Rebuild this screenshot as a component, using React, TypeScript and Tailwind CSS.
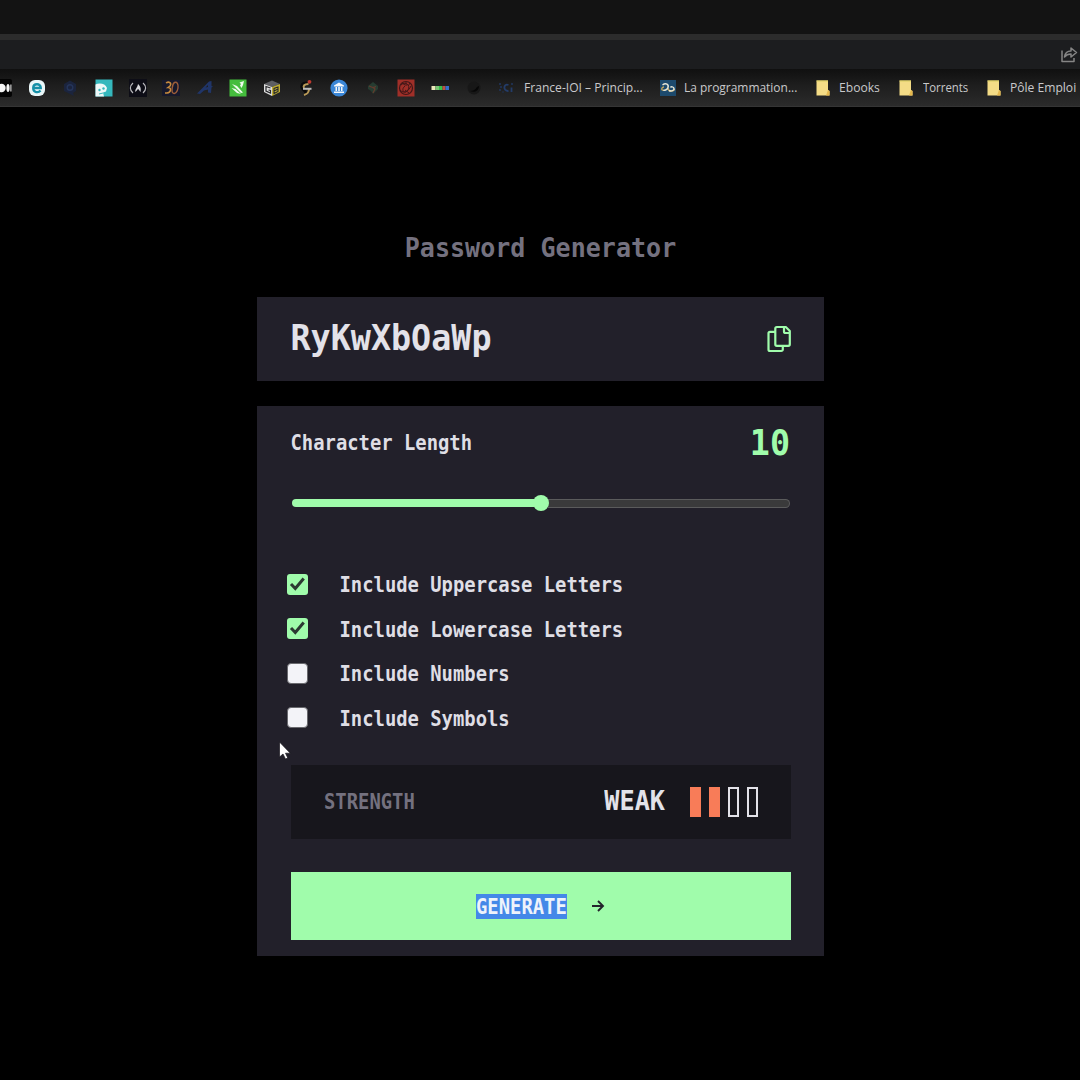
import React from 'react';

const mono = "font-['DejaVu_Sans_Mono',monospace] font-bold whitespace-pre";

function Favicon({ children }: { children: React.ReactNode }) {
  return (
    <div className="w-[33.6px] shrink-0 flex justify-center">
      <svg width="18" height="18" viewBox="0 0 18 18" fill="none">{children}</svg>
    </div>
  );
}

function Favicons() {
  return (
    <div className="flex shrink-0 -ml-[13.5px]">
      <Favicon>
        <rect width="18" height="18" rx="2" fill="#030303" />
        <circle cx="7.500" cy="9" r="4.200" fill="#f4f4f4" />
        <ellipse cx="14" cy="9" rx="1.600" ry="4" fill="#f4f4f4" />
        <rect x="16.300" y="5.500" width="1.200" height="7" fill="#d4d4d4" />
      </Favicon>
      <Favicon>
        <rect x="1" y="1" width="16" height="16" rx="6" fill="#e9f6f8" />
        <path d="M5.200 9h7.600c0-5-7.600-5-7.600 0s5.500 5 7.300 2.500" stroke="#1590a8" strokeWidth="2.300" />
      </Favicon>
      <Favicon>
        <path d="M9 1.500l6 3.500v7l-3 2 1 3-4-2-6-3V5z" fill="#1b243d" />
        <circle cx="9" cy="8.500" r="2.800" stroke="#25355a" strokeWidth="1.400" />
      </Favicon>
      <Favicon>
        <rect x="0.500" y="0.500" width="17" height="17" fill="#35b8bd" />
        <path d="M0.500 5.500c4-2 10-1 11.500 3.500l-1 3.500-3 1 1 4H0.500z" fill="#eef8f8" />
        <circle cx="4.500" cy="11" r="1.200" fill="#35b8bd" />
        <circle cx="8.500" cy="9.500" r="1.200" fill="#35b8bd" />
        <path d="M4 15l4-1" stroke="#35b8bd" />
      </Favicon>
      <Favicon>
        <rect width="18" height="18" fill="#0d0d16" />
        <path d="M4 4C0.500 7 0.500 11 4 14M14 4c3.500 3 3.500 7 0 10" stroke="#b9b9bd" strokeWidth="1.200" />
        <path d="M6.500 13c-1-3 2-4 2.500-8 3 3 3 5 2.500 8-1-1-1-2-2.500-3-1 1-1.500 2-2.500 3z" fill="#d8d8dc" />
      </Favicon>
      <Favicon>
        <rect y="1" width="18" height="16" fill="#16182c" />
        <path d="M4 4c3-2 6 0 4 3L6 8.500c4 0 3 5-1 5.500H3" stroke="#c78a3e" strokeWidth="1.500" />
        <path d="M12.500 3.500c-2 1-3.500 9-1.500 10.500s4.500-1 5-5-1-6.500-3.500-5.500z" stroke="#9b5c3a" strokeWidth="1.400" />
      </Favicon>
      <Favicon>
        <path d="M1 14.500L13 2.500l2.500-.5V7l1.500.5-1.500 1L15 14l-3-.5v-3l-4 1-4 3.500zM9.500 8.500l2.500-.5V6z" fill="#203568" fillRule="evenodd" />
      </Favicon>
      <Favicon>
        <rect x="0.500" y="0.500" width="17" height="17" fill="#45bd3d" />
        <path d="M3 5l5 2 6 6.500-2 .5zM2.500 9l4 1 5.500 5-4-1zM10.500 3.500l4.500-1.500-1 4-1.500 3-1.500-2.500 1-1.500z" fill="#effbed" />
      </Favicon>
      <Favicon>
        <path d="M1 5l8-3.500L17 5l-8 3z" fill="#5e5f63" />
        <path d="M1 5l8 3v9l-8-4z" fill="#dedede" />
        <path d="M17 5L9 8v9l8-4z" fill="#c0ae32" />
        <path d="M7.500 9L3 7.500v4.500l4.500 2v-2.500L5.500 11" stroke="#27272a" strokeWidth="1.200" />
        <path d="M11 9.500v5l4-2V8zM11 12l4-2" stroke="#27272a" strokeWidth="1.100" />
      </Favicon>
      <Favicon>
        <path d="M10 4C4 4 4 8 6 10s4 3 2 6" stroke="#09090a" strokeWidth="3" />
        <path d="M11.500 5C7 5 6 7 7 9M12 10c0 4-2 5-5 6" stroke="#b99a58" strokeWidth="2" />
        <path d="M6 9.800h8.500" stroke="#bababa" strokeWidth="2" />
        <circle cx="12.500" cy="2.800" r="1.900" fill="#bd392e" />
      </Favicon>
      <Favicon>
        <circle cx="9" cy="9" r="8.600" fill="#3a86d6" />
        <path d="M4 6.500L9 3.500l5 3v1H4zM5.500 8h1.500v4H5.500zM8.200 8h1.600v4H8.200zM11 8h1.500v4H11zM4 12.500h10V14H4z" fill="#f4f8fc" />
      </Favicon>
      <Favicon>
        <path d="M4 7l5-4 5 4 0 3-5 5-2-3-3-2z" fill="#263c31" />
        <path d="M5 7l4 1.500 3-1M9 8.500l2 1.500-2 4" stroke="#643a2d" strokeWidth="1.200" />
      </Favicon>
      <Favicon>
        <rect x="0.500" y="0.500" width="17" height="17" fill="#a02f28" />
        <circle cx="9" cy="9" r="6.500" stroke="#421718" strokeWidth="1.200" />
        <path d="M4 6c4-4 10 0 7 5s-8 0-3-4M3 11c4 4 8 2 11-4M9 3v4M8 11l4 3M5 4l3 2M13 4l-2 3" stroke="#421718" strokeWidth="1" />
      </Favicon>
      <Favicon>
        <rect x="0.500" y="7" width="4" height="4" fill="#ebe7ba" />
        <rect x="4.500" y="7" width="3.500" height="4" fill="#7bc575" />
        <rect x="8" y="7" width="3.500" height="4" fill="#36c14b" />
        <rect x="11.500" y="7" width="3" height="4" fill="#bf5141" />
        <rect x="14.500" y="7" width="3.500" height="4" fill="#346dca" />
      </Favicon>
      <Favicon>
        <circle cx="9" cy="9" r="6.500" fill="#171717" />
        <path d="M5 12c3 0 5-1 7-4l2-1c0 5-5 7-9 5z" fill="#070707" />
      </Favicon>
      <Favicon>
        <path d="M10.500 6C5 4 5 12.500 10.500 12M13.500 8.500V13" stroke="#233c69" strokeWidth="1.800" />
        <path d="M1 5h2M2 8h2M1 11h2M13 5h2M4.500 13h1" stroke="#20365d" strokeWidth="1.500" />
      </Favicon>
    </div>
  );
}

function Folder() {
  return (
    <svg width="14" height="16" viewBox="0 0 14 16" className="shrink-0">
      <path d="M0.500 0.500h11.500V10l1.500 1v4.500H0.500z" fill="#f4dc86" />
      <path d="M0.500 0.500h11.500v1H0.500z" fill="#d8cf60" />
      <path d="M12 10l1.500 1v4.500H10z" fill="#e5b84d" />
    </svg>
  );
}

function BrowserChrome() {
  const label = "font-['Open_Sans','Noto_Sans',sans-serif] text-[13px] leading-[18px] pb-[2px] whitespace-nowrap text-[#c9c9cb]";
  return (
    <header className="h-[108px] overflow-hidden">
      <div className="h-[34px] bg-[#131313]" />
      <div className="h-[6px] bg-[#2c2c2c]" />
      <div className="h-[29px] bg-[#1c1d1f] flex justify-end pr-[2px] pt-[5px]">
        <svg width="18" height="18" viewBox="0 0 18 18" fill="none" stroke="#858585" strokeWidth="1.500" strokeLinejoin="round">
          <path d="M2 5.500v11h12V13" />
          <path d="M4.500 12C5 8 7.500 6 11 6V3l5.500 4.500L11 12V9C8 9 6 10 4.500 12z" />
        </svg>
      </div>
      <div className="h-[38px] flex items-center bg-linear-to-b from-[#101010] via-[#1e1e1e] via-45% to-[#2b2b2b] border-b border-[#353535]">
        <Favicons />
        <span className={`${label} ml-[-0.500px] w-[136px] shrink-0`}><Fit w={119}>France-IOI – Princip...</Fit></span>
        <svg width="16" height="16" viewBox="0 0 16 16" fill="none" className="shrink-0">
          <rect width="16" height="16" fill="#1d4a6d" />
          <path d="M4 10c-3 1-3-3 0-3M8 8c0 4 6 4 6.500 1" stroke="#c7a75b" strokeWidth="1.300" />
          <path d="M2.500 5C6 2.500 9 4.500 8 7.500S4 10.500 3.500 10M9 10.500c2 1 5.500 0 5-2S11 6.500 10.500 7.500" stroke="#e6e5d6" strokeWidth="1.500" />
        </svg>
        <span className={`${label} ml-2 w-[132.500px] shrink-0`}><Fit w={113}>La programmation...</Fit></span>
        <Folder />
        <span className={`${label} ml-[9px] w-[60px] shrink-0`}><Fit w={41}>Ebooks</Fit></span>
        <Folder />
        <span className={`${label} ml-[9.500px] w-[64px] shrink-0`}><Fit w={45.5}>Torrents</Fit></span>
        <Folder />
        <span className={`${label} ml-[9px] shrink-0`}><Fit w={66}>Pôle Emploi</Fit></span>
      </div>
    </header>
  );
}

/* Scales a label horizontally so that it occupies exactly w pixels. */
function Fit({ w, children }: { w: number; children: React.ReactNode }) {
  const ref = React.useRef<HTMLSpanElement>(null);
  const [scale, setScale] = React.useState(1);
  React.useLayoutEffect(() => {
    if (ref.current) setScale(w / ref.current.offsetWidth);
  }, [w]);
  return (
    <span ref={ref} className="inline-block origin-left" style={{ transform: `scaleX(${scale})` }}>
      {children}
    </span>
  );
}

function CopyIcon() {
  return (
    <svg width="26" height="28" viewBox="0 0 26 28" fill="none" stroke="#a0fcab" strokeWidth="2.200" strokeLinejoin="round">
      <path d="M10.800 2h9l4 4v13.300a1.500 1.500 0 0 1-1.500 1.500H10.800a1.500 1.500 0 0 1-1.500-1.500V3.500A1.500 1.500 0 0 1 10.800 2z" />
      <path d="M18 2v4.500a1.500 1.500 0 0 0 1.500 1.500h4.500" />
      <path d="M9.300 6.800H4A1.500 1.500 0 0 0 2.500 8.300v16.200A1.500 1.500 0 0 0 4 26h11.300a1.500 1.500 0 0 0 1.500-1.500v-3.700" />
    </svg>
  );
}

const options = [
  { label: 'Include Uppercase Letters', on: true },
  { label: 'Include Lowercase Letters', on: true },
  { label: 'Include Numbers', on: false },
  { label: 'Include Symbols', on: false },
];

function Check({ on }: { on: boolean }) {
  if (!on) {
    return <span className="size-[21px] rounded-[4px] bg-[#f3f3f8] border border-[#69696e]" />;
  }
  return (
    <span className="size-[21px] rounded-[3px] bg-[#a0fcab]">
      <svg width="21" height="21" viewBox="0 0 21 21" fill="none">
        <path d="M4 10l4.300 4.500L16.700 4.500" stroke="#2c3a32" strokeWidth="3" />
      </svg>
    </span>
  );
}

export default function App() {
  return (
    <div className="relative w-[1080px] h-[1080px] bg-black overflow-hidden">
      <BrowserChrome />
      <main className="w-[567px] ml-[257px] pt-[120px]">
        <h1 className={`${mono} scale-y-[1.08] text-center text-[25px] leading-[40px] tracking-[0.03px] text-[#74717f] mb-[29px]`}>Password Generator</h1>
        <section className="h-[84px] bg-[#22202a] flex items-center justify-between pl-[33.500px] pr-[32px]">
          <span className={`${mono} scale-y-[1.08] text-[33.4px] leading-[40px] text-[#e3e2e9] mb-[3px]`}>RyKwXbOaWp</span>
          <CopyIcon />
        </section>
        <section className="mt-[25px] h-[550px] bg-[#22202a] px-[34px]">
          <div className="flex items-center justify-between pt-[16px] h-[57px]">
            <span className={`${mono} scale-y-[1.08] text-[18.85px] pt-[2px] -ml-[0.500px] text-[#dfdee5]`}>Character Length</span>
            <span className={`${mono} scale-y-[1.08] text-[33.4px] leading-[40px] text-[#a0fcab]`}>10</span>
          </div>
          <div className="mt-[32px] h-[16px] flex items-center">
            <div className="h-[8px] w-[242px] ml-px -mr-px rounded-l-full bg-[#a0fcab]" />
            <div className="size-[16px] shrink-0 rounded-full bg-[#a0fcab] z-10" />
            <div className="h-[9px] grow -ml-px rounded-r-full bg-[#3a3a3b] border border-l-0 border-[#5b5b5c]" />
          </div>
          <div className="mt-[51.200px] -ml-[4px]">
            {options.map((o) => (
              <label key={o.label} className="h-[44.5px] flex items-center">
                <Check on={o.on} />
                <span className={`${mono} scale-y-[1.08] ml-[31.500px] pt-[2px] text-[18.85px] text-[#dfdee5]`}>{o.label}</span>
              </label>
            ))}
          </div>
          <div className="mt-[24.800px] w-[500px] h-[74px] bg-[#17161c] flex items-center px-[33px]">
            <span className={`${mono} scale-y-[1.08] grow pt-px text-[18.85px] text-[#74717f]`}>STRENGTH</span>
            <span className={`${mono} scale-y-[1.08] text-[25.2px] mb-[2px] text-[#e3e2e9]`}>WEAK</span>
            <div className="ml-[25px] flex gap-[8px]">
              <span className="w-[11px] h-[30px] bg-[#f87c58]" />
              <span className="w-[11px] h-[30px] bg-[#f87c58]" />
              <span className="w-[11px] h-[30px] border-2 border-[#e3e2e9]" />
              <span className="w-[11px] h-[30px] border-2 border-[#e3e2e9]" />
            </div>
          </div>
          <button className="mt-[33px] w-[500px] h-[68px] bg-[#a0fcab] flex items-center pl-[185px]">
            <span className="h-[25px] mt-px bg-[#4488e8]">
              <span className={`${mono} block scale-y-[1.08] text-[18.85px] leading-[25px] text-[#eef3fb]`}>GENERATE</span>
            </span>
            <svg width="14" height="14" viewBox="0 0 14 14" fill="none" stroke="#24232c" strokeWidth="1.900" className="ml-[24px]">
              <path d="M1 7h11M7 2l5 5-5 5" />
            </svg>
          </button>
        </section>
      </main>
      <svg width="14" height="19" viewBox="0 0 14 19" className="absolute left-[278px] top-[741px]">
        <path d="M1.500 1v15l3.500-3 2.500 5 2.300-1-2.300-4.800h4.800z" fill="#fff" stroke="#17161c" strokeWidth="0.700" />
      </svg>
    </div>
  );
}
